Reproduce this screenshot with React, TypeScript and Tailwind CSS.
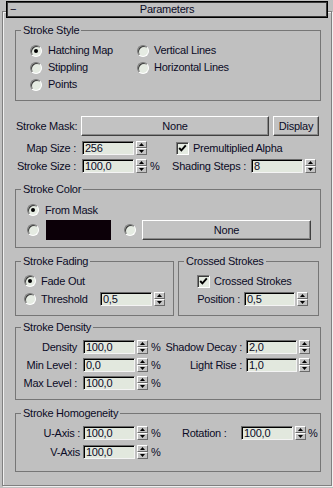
import type { ReactNode } from "react";

function Group({ title, className = "", children }: { title: string; className?: string; children: ReactNode }) {
  return (
    <fieldset className={`border border-[#767676] ${className}`}>
      <legend className="ml-[5px] px-[2px] leading-[13px]">{title}</legend>
      {children}
    </fieldset>
  );
}

function Radio({ on = false }: { on?: boolean }) {
  return (
    <span className="flex h-[12px] w-[12px] shrink-0 items-center justify-center rounded-full border border-t-[#7a7a7a] border-r-white border-b-white border-l-[#7a7a7a] bg-[#e5ebe2] shadow-[inset_1px_1px_0_#3c3c3c]">
      {on ? <span className="h-[4px] w-[4px] rounded-full bg-black" /> : null}
    </span>
  );
}

function Check({ on = false }: { on?: boolean }) {
  return (
    <span className="flex h-[13px] w-[13px] shrink-0 items-center justify-center border border-t-[#7a7a7a] border-r-white border-b-white border-l-[#7a7a7a] bg-[#e5ebe2] shadow-[inset_1px_1px_0_#3c3c3c]">
      {on ? (
        <svg width="9" height="9" viewBox="0 0 9 9">
          <path d="M1.2 4 L3.4 6.4 L7.8 1.4" stroke="#000" strokeWidth="1.9" fill="none" />
        </svg>
      ) : null}
    </span>
  );
}

function Field({ value, w = "w-[52px]" }: { value: string; w?: string }) {
  return (
    <span
      className={`flex h-[14px] ${w} shrink-0 items-center border border-t-[#6a6a6a] border-r-[#f4f4f4] border-b-[#f4f4f4] border-l-[#6a6a6a] bg-[#e2e8de] pl-[2px] leading-[12px] shadow-[inset_1px_1px_0_#000]`}
    >
      {value}
    </span>
  );
}

function Spinner() {
  return (
    <span className="flex h-[14px] w-[11px] shrink-0 flex-col">
      <span className="flex h-[7px] items-center justify-center border border-t-white border-r-[#6a6a6a] border-b-[#6a6a6a] border-l-white bg-[#c4c4c4]">
        <svg width="5" height="3" viewBox="0 0 5 3">
          <path d="M2.5 0 L5 3 L0 3 Z" fill="#000" />
        </svg>
      </span>
      <span className="flex h-[7px] items-center justify-center border border-t-white border-r-[#6a6a6a] border-b-[#6a6a6a] border-l-white bg-[#c4c4c4]">
        <svg width="5" height="3" viewBox="0 0 5 3">
          <path d="M0 0 L5 0 L2.5 3 Z" fill="#000" />
        </svg>
      </span>
    </span>
  );
}

function Btn({ children, w }: { children: ReactNode; w: string }) {
  return (
    <span
      className={`flex h-[20px] ${w} shrink-0 items-center justify-center border border-t-white border-r-[#404040] border-b-[#404040] border-l-white bg-[#c2c2c2] shadow-[inset_-1px_-1px_0_#8a8a8a]`}
    >
      {children}
    </span>
  );
}

export default function App() {
  return (
    <div className="h-[488px] w-[333px] overflow-hidden bg-[#c0c0c0] pt-[1px] font-['Liberation_Sans',Arial,sans-serif] text-[11px] leading-[13px] tracking-[-0.25px] text-[#0b0b26]">
      {/* rollout title bar */}
      <div className="relative z-10 ml-[6px] mr-[5px] flex h-[17px] items-center border border-black bg-[#c0c0c0] shadow-[inset_0_0_0_1px_#3a3a3a]">
        <span className="w-[14px] pl-[3px]">−</span>
        <span className="flex-1 text-center">Parameters</span>
        <span className="w-[14px]" />
      </div>

      <div className="-mt-[7px] ml-[2px] mr-[1px] h-[475px] border border-[#808080] pl-[12px] pr-[10px] pt-[12px] shadow-[inset_1px_1px_0_#f0f0f0,1px_1px_0_#f0f0f0]">
        <Group title="Stroke Style">
          <div className="grid auto-rows-[17px] grid-cols-[107px_auto] pb-[7px] pl-[14px] pt-[5px]">
            <span className="flex items-center gap-[6px]">
              <Radio on />
              Hatching Map
            </span>
            <span className="flex items-center gap-[5px]">
              <Radio />
              Vertical Lines
            </span>
            <span className="flex items-center gap-[6px]">
              <Radio />
              Stippling
            </span>
            <span className="flex items-center gap-[5px]">
              <Radio />
              Horizontal Lines
            </span>
            <span className="flex items-center gap-[6px]">
              <Radio />
              Points
            </span>
          </div>
        </Group>

        <div className="mt-[15px] flex h-[20px] items-center">
          <span className="w-[66px] pl-[1px]">Stroke Mask:</span>
          <Btn w="w-[188px]">None</Btn>
          <span className="w-[4px]" />
          <Btn w="w-[46px]">Display</Btn>
        </div>

        <div className="mt-[3px] flex h-[18px] items-center">
          <span className="w-[62px] pr-[1px] text-right">Map Size :</span>
          <span className="w-[5px]" />
          <Field value="256" />
          <span className="w-[2px]" />
          <Spinner />
          <span className="w-[29px]" />
          <Check on />
          <span className="pl-[4px]">Premultiplied Alpha</span>
        </div>

        <div className="flex h-[18px] items-center">
          <span className="w-[62px] pr-[1px] text-right">Stroke Size :</span>
          <span className="w-[5px]" />
          <Field value="100,0" />
          <span className="w-[2px]" />
          <Spinner />
          <span className="w-[12px] pl-[3px]">%</span>
          <span className="w-[87px] text-right">Shading Steps :</span>
          <span className="w-[5px]" />
          <Field value="8" />
          <span className="w-[2px]" />
          <Spinner />
        </div>

        <Group title="Stroke Color" className="mt-[8px]">
          <div className="pb-[7px] pl-[11px] pt-[5px]">
            <div className="flex h-[18px] items-center gap-[6px]">
              <Radio on />
              From Mask
            </div>
            <div className="mt-[1px] flex h-[20px] items-center">
              <Radio />
              <span className="ml-[7px] h-[20px] w-[65px] bg-[#0c0008]" />
              <span className="ml-[13px]">
                <Radio />
              </span>
              <span className="ml-[6px]">
                <Btn w="w-[169px]">None</Btn>
              </span>
            </div>
          </div>
        </Group>

        <div className="mt-[7px] flex gap-[4px]">
          <Group title="Stroke Fading" className="w-[159px]">
            <div className="pb-[7px] pl-[8px] pt-[4px]">
              <div className="flex h-[18px] items-center gap-[5px]">
                <Radio on />
                Fade Out
              </div>
              <div className="flex h-[18px] items-center">
                <Radio />
                <span className="w-[64px] pl-[5px]">Threshold</span>
                <Field value="0,5" />
                <span className="w-[2px]" />
                <Spinner />
              </div>
            </div>
          </Group>

          <Group title="Crossed Strokes" className="w-[141px]">
            <div className="pb-[7px] pt-[4px]">
              <div className="flex h-[18px] items-center pl-[18px]">
                <Check on />
                <span className="pl-[4px]">Crossed Strokes</span>
              </div>
              <div className="flex h-[18px] items-center">
                <span className="w-[61px] text-right">Position :</span>
                <span className="w-[4px]" />
                <Field value="0,5" w="w-[51px]" />
                <span className="w-[2px]" />
                <Spinner />
              </div>
            </div>
          </Group>
        </div>

        <Group title="Stroke Density" className="mt-[5px]">
          <div className="pb-[7px] pt-[4px]">
            <div className="flex h-[18px] items-center">
              <span className="w-[62px] pr-[1px] text-right">Density</span>
              <span className="w-[5px]" />
              <Field value="100,0" />
              <span className="w-[2px]" />
              <Spinner />
              <span className="w-[12px] pl-[3px]">%</span>
              <span className="w-[82px] text-right">Shadow Decay :</span>
              <span className="w-[4px]" />
              <Field value="2,0" w="w-[51px]" />
              <span className="w-[2px]" />
              <Spinner />
            </div>
            <div className="flex h-[18px] items-center">
              <span className="w-[62px] pr-[1px] text-right">Min Level :</span>
              <span className="w-[5px]" />
              <Field value="0,0" />
              <span className="w-[2px]" />
              <Spinner />
              <span className="w-[12px] pl-[3px]">%</span>
              <span className="w-[82px] text-right">Light Rise :</span>
              <span className="w-[4px]" />
              <Field value="1,0" w="w-[51px]" />
              <span className="w-[2px]" />
              <Spinner />
            </div>
            <div className="flex h-[18px] items-center">
              <span className="w-[62px] pr-[1px] text-right">Max Level :</span>
              <span className="w-[5px]" />
              <Field value="100,0" />
              <span className="w-[2px]" />
              <Spinner />
              <span className="w-[12px] pl-[3px]">%</span>
            </div>
          </div>
        </Group>

        <Group title="Stroke Homogeneity" className="mt-[7px]">
          <div className="pb-[10px] pt-[4px]">
            <div className="flex h-[18px] items-center">
              <span className="w-[64px] text-right">U-Axis :</span>
              <span className="w-[3px]" />
              <Field value="100,0" />
              <span className="w-[2px]" />
              <Spinner />
              <span className="w-[12px] pl-[3px]">%</span>
              <span className="w-[22px]" />
              <span className="w-[59px]">Rotation :</span>
              <Field value="100,0" />
              <span className="w-[2px]" />
              <Spinner />
              <span className="pl-[2px]">%</span>
            </div>
            <div className="mt-[1px] flex h-[18px] items-center">
              <span className="w-[64px] text-right">V-Axis</span>
              <span className="w-[3px]" />
              <Field value="100,0" />
              <span className="w-[2px]" />
              <Spinner />
              <span className="w-[12px] pl-[3px]">%</span>
            </div>
          </div>
        </Group>
      </div>
    </div>
  );
}
